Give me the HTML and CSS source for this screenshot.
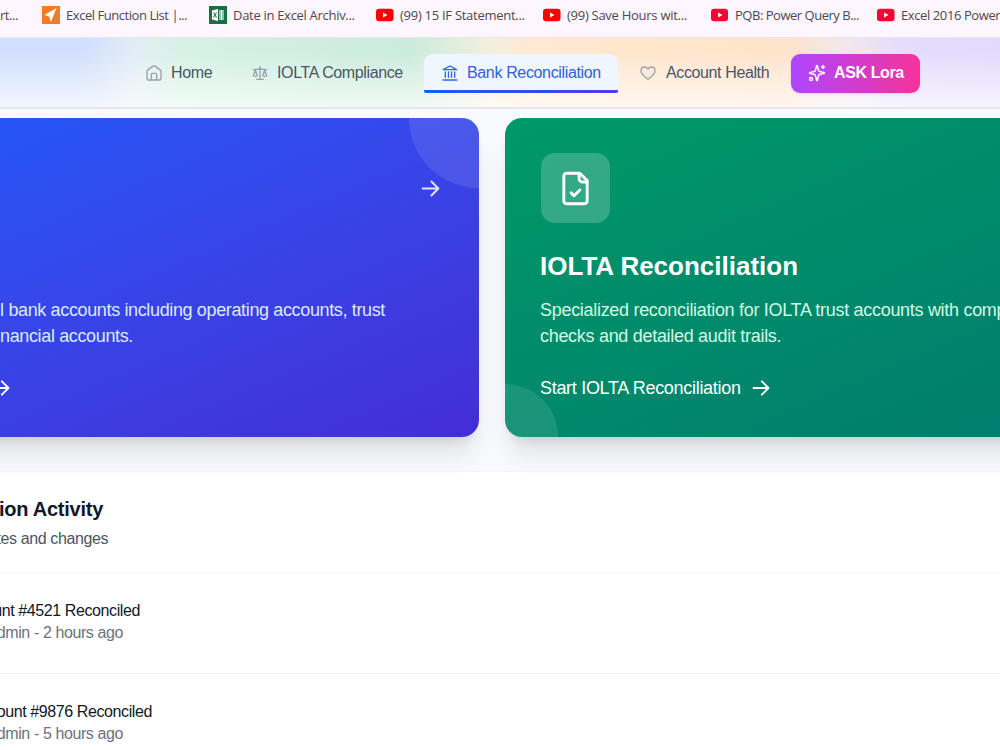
FILE: index.html
```html
<!DOCTYPE html>
<html lang="en">
<head>
  <meta charset="UTF-8">
  <meta name="viewport" content="width=device-width, initial-scale=1.0">
  <title>Bank Reconciliation</title>
  <link rel="stylesheet" href="styles.css">
</head>
<body>
  <!-- Bookmarks bar -->
  <div class="bookmarks">
    <div class="bookmark bm-first"><span>rt...</span></div>
    <div class="bookmark bm-functions">
      <svg width="18" height="18" viewBox="0 0 18 18"><rect width="18" height="18" fill="#ee7d2b"/><path d="M14.500 2L2.500 9l4.500 1.500L9 16z" fill="#fff"/></svg>
      <span>Excel Function List |...</span>
    </div>
    <div class="bookmark bm-date">
      <svg width="18" height="18" viewBox="0 0 18 18"><rect width="18" height="18" fill="#1d6f42"/><path d="M3 4.500l6-1.500v12l-6-1.500z" fill="#fff"/><path d="M4.500 6.500l3 5M7.500 6.500l-3 5" stroke="#1d6f42"/><path d="M10 4h5v10h-5z" fill="#8fc3a5"/><path d="M12.500 4v10" stroke="#fff"/></svg>
      <span>Date in Excel Archiv...</span>
    </div>
    <div class="bookmark bm-if">
      <svg width="18" height="14" viewBox="0 0 18 14"><rect y=".7" width="17.500" height="12.500" rx="3" fill="#f00"/><path d="M7 4.500v5l4.500-2.500z" fill="#fff"/></svg>
      <span>(99) 15 IF Statement...</span>
    </div>
    <div class="bookmark bm-hours">
      <svg width="18" height="14" viewBox="0 0 18 14"><rect y=".7" width="17.500" height="12.500" rx="3" fill="#f00"/><path d="M7 4.500v5l4.500-2.500z" fill="#fff"/></svg>
      <span>(99) Save Hours wit...</span>
    </div>
    <div class="bookmark bm-pqb">
      <svg width="18" height="14" viewBox="0 0 18 14"><rect y=".7" width="17" height="12.500" rx="3" fill="#ff0033"/><path d="M7 4.500v5l4.500-2.500z" fill="#fff"/></svg>
      <span>PQB: Power Query B...</span>
    </div>
    <div class="bookmark bm-power">
      <svg width="18" height="14" viewBox="0 0 18 14"><rect y=".7" width="17.500" height="12.500" rx="3" fill="#ff0033"/><path d="M7 4.500v5l4.500-2.500z" fill="#fff"/></svg>
      <span>Excel 2016 Power</span>
    </div>
  </div>

  <!-- Main navigation -->
  <header class="header">
    <nav class="nav">
      <a class="nav-item nav-home">
        <svg class="icon" viewBox="0 0 24 24"><path d="M1.500 9.500Q1.500 8.500 2.500 7.700L10.500 1.700Q12 .8 13.500 1.700L21.500 7.700Q22.500 8.500 22.500 9.500V20.500a2 2 0 0 1-2 2h-17a2 2 0 0 1-2-2z"/><path d="M8 22v-7.500a2 2 0 0 1 2-2h4a2 2 0 0 1 2 2V22"/></svg>
        <span>Home</span>
      </a>
      <a class="nav-item nav-iolta">
        <svg class="icon" viewBox="0 0 24 24"><path d="M16 16l3-8 3 8c-.87.65-1.920 1-3 1s-2.130-.35-3-1zM2 16l3-8 3 8c-.87.65-1.920 1-3 1s-2.130-.35-3-1zM7 21.500h10M12 2.500v19M2 7h3c2 0 5-1 7-2 2 1 5 2 7 2h3"/></svg>
        <span>IOLTA Compliance</span>
      </a>
      <a class="nav-item nav-bank active">
        <svg class="icon" viewBox="0 0 24 24"><path d="M2 7L12 1.500 22 7z"/><path d="M5 10.500v8M9.700 10.500v8M14.300 10.500v8M19 10.500v8M1.500 22.500h21"/></svg>
        <span>Bank Reconciliation</span>
      </a>
      <a class="nav-item nav-health">
        <svg class="icon" viewBox="0 0 24 24"><path d="M12 21.500C8 18.500 1.500 14 1.500 8.500c0-3.300 2.500-5.500 5.300-5.500C9 3 11 4.200 12 6c1-1.800 3-3 5.200-3 2.800 0 5.300 2.200 5.300 5.500 0 5.500-6.500 10-10.500 13z"/></svg>
        <span>Account Health</span>
      </a>
      <a class="ask-btn">
        <svg class="icon" viewBox="0 0 24 24"><path d="M9.937 15.500A2 2 0 0 0 8.500 14.063l-6.135-1.582a.5.5 0 0 1 0-.962L8.500 9.936A2 2 0 0 0 9.937 8.500l1.582-6.135a.5.5 0 0 1 .963 0L14.063 8.500A2 2 0 0 0 15.500 9.937l6.135 1.581a.5.5 0 0 1 0 .964L15.500 14.063a2 2 0 0 0-1.437 1.437l-1.582 6.135a.5.5 0 0 1-.963 0zM20 2v4M22 4h-4"/><circle cx="4" cy="20" r="2"/></svg>
        <span>ASK Lora</span>
      </a>
    </nav>
  </header>

  <!-- Reconciliation types -->
  <main class="cards">
    <section class="card card-bank">
      <div class="card-circle"></div>
      <div class="card-top">
        <svg class="arrow arrow-lg" viewBox="0 0 24 24"><path d="M3 12h18M13 4l8 8-8 8"/></svg>
      </div>
      <p class="card-text"><span>all bank accounts including operating accounts, trust</span><span class="line-two">financial accounts.</span></p>
      <div class="card-link">
        <svg class="arrow" viewBox="0 0 24 24"><path d="M3 12h18M13 4l8 8-8 8"/></svg>
      </div>
    </section>
    <section class="card card-iolta">
      <div class="card-circle"></div>
      <div class="card-icon">
        <svg viewBox="0 0 24 24"><path d="M15 1.500H6a2 2 0 0 0-2 2v17a2 2 0 0 0 2 2h12a2 2 0 0 0 2-2v-14z"/><path d="M14.500 2v3.500a2 2 0 0 0 2 2H20M9 15l2 2 4-4"/></svg>
      </div>
      <h2 class="card-title">IOLTA Reconciliation</h2>
      <p class="card-text">Specialized reconciliation for IOLTA trust accounts with compliance<br>checks and detailed audit trails.</p>
      <div class="card-link">
        <span>Start IOLTA Reconciliation</span>
        <svg class="arrow" viewBox="0 0 24 24"><path d="M3 12h18M13 4l8 8-8 8"/></svg>
      </div>
    </section>
  </main>

  <!-- Recent activity -->
  <section class="activity">
    <div class="activity-header">
      <h3 class="clip clip-title"><span>Reconciliation Activity</span></h3>
      <p class="clip clip-sub"><span>updates and changes</span></p>
    </div>
    <div class="activity-row">
      <p class="clip row-name-one"><span>Account #4521 Reconciled</span></p>
      <p class="clip row-meta"><span>Admin - 2 hours ago</span></p>
    </div>
    <div class="activity-row">
      <p class="clip row-name-two"><span>Account #9876 Reconciled</span></p>
      <p class="clip row-meta"><span>Admin - 5 hours ago</span></p>
    </div>
  </section>
</body>
</html>
```
FILE: styles.css
```css
* {
  box-sizing: border-box;
}

body {
  margin: 0;
  width: 1000px;
  height: 750px;
  overflow: hidden;
  background: #f9fafd;
  font-family: "Liberation Sans", Arial, sans-serif;
}

h2, h3, p {
  margin: 0;
}

svg {
  flex-shrink: 0;
  display: block;
}

.icon, .arrow, .card-icon svg {
  fill: none;
  stroke: currentColor;
  stroke-width: 2;
  stroke-linecap: round;
  stroke-linejoin: round;
}

/* bookmarks */
.bookmarks {
  display: flex;
  align-items: center;
  height: 38px;
  padding-bottom: 7px;
  background: #fdf6fe;
  border-bottom: 1px solid #e9e3ea;
  font-family: "Open Sans", "Noto Sans", sans-serif;
  font-size: 13px;
  letter-spacing: -0.3px;
  color: #4d484f;
  white-space: nowrap;
}

.bookmark {
  display: flex;
  align-items: center;
  gap: 6px;
  flex-shrink: 0;
}

.bm-first { width: 42px; letter-spacing: -0.45px; }
.bm-functions { width: 167px; letter-spacing: -0.45px; }
.bm-date { width: 167px; }
.bm-if { width: 167px; letter-spacing: -0.27px; }
.bm-hours { width: 168px; letter-spacing: -0.27px; }
.bm-pqb { width: 166px; letter-spacing: -0.48px; }
.bm-power { letter-spacing: -0.4px; }

/* header */
.header {
  height: 71px;
  padding: 16px 0 0 128px;
  border-bottom: 2px solid #e7e8ee;
  background:
    linear-gradient(to bottom, rgba(255, 255, 255, 0) 20%, rgba(255, 255, 255, 0.7) 100%),
    linear-gradient(94deg, #d2dffe 0, #d2dffe 85px, #e2eef4 140px, #d5f2e4 185px, #cbebdc 410px, #f3f0dd 490px, #ffe9d0 530px, #ffe3cb 790px, #f1e7ed 845px, #e6dcfd 900px, #e2d9fd 100%);
}

.nav {
  display: flex;
  gap: 4px;
}

.nav-item, .ask-btn {
  display: flex;
  align-items: center;
  height: 39px;
  padding: 0 17px 2px 18px;
  gap: 9px;
  font-size: 16px;
  letter-spacing: -0.38px;
  color: #4a5565;
  white-space: nowrap;
}

.nav-item .icon {
  width: 16px;
  height: 16px;
  color: #99a1af;
}

.nav-home { width: 102px; }
.nav-iolta { width: 186px; }
.nav-bank { width: 194px; letter-spacing: -0.35px; }
.nav-health { width: 165px; gap: 10px; }

/* underline is a second background so the top corners stay round */
.nav-item.active {
  border-radius: 9px 9px 2px 2px;
  background:
    linear-gradient(to right, #155dfc, #4f39f6) bottom / 100% 3px no-repeat,
    #eff6ff;
  color: #2f62d9;
}

.nav-item.active .icon {
  color: #2f66e6;
}

.ask-btn {
  width: 129px;
  padding-left: 17px;
  gap: 8px;
  border-radius: 9px;
  background: linear-gradient(to right, #ad46ff, #f6339a);
  box-shadow: 0 1px 3px rgba(0, 0, 0, 0.12);
  color: #fff;
  font-weight: bold;
}

.ask-btn .icon {
  width: 18px;
  height: 18px;
}

/* cards */
.cards {
  display: grid;
  grid-template-columns: 740px 740px;
  gap: 26px;
  height: 362px;
  margin-left: -261px;
  padding-top: 9px;
}

.card {
  position: relative;
  height: 318.500px;
  padding: 35px 35px 35px 36px;
  overflow: hidden;
  border-radius: 17px;
  box-shadow: 0 22px 27px -5px rgba(0, 0, 0, 0.1), 0 9px 11px -6px rgba(0, 0, 0, 0.1);
  color: #fff;
}

.card-bank {
  background: linear-gradient(to bottom right in oklab, #155dfc, #432dd7);
}

.card-iolta {
  background: linear-gradient(to bottom right in oklab, #009966, #00786f);
}

.card-circle {
  position: absolute;
  border-radius: 50%;
  background: rgba(255, 255, 255, 0.1);
}

.card-bank .card-circle {
  top: -69px;
  right: -69px;
  width: 139px;
  height: 139px;
}

.card-iolta .card-circle {
  left: -52px;
  bottom: -52px;
  width: 105px;
  height: 105px;
}

.card-icon {
  display: flex;
  align-items: center;
  justify-content: center;
  width: 69px;
  height: 70px;
  border-radius: 14px;
  background: rgba(255, 255, 255, 0.2);
}

.card-icon svg {
  width: 35px;
  height: 35px;
}

.card-title {
  margin-top: 26px;
  font-size: 26px;
  line-height: 35px;
}

.card-text {
  font-size: 18px;
  letter-spacing: -0.33px;
  line-height: 26px;
  white-space: nowrap;
}

.card-bank .card-top {
  display: flex;
  align-items: center;
  justify-content: flex-end;
  height: 70px;
  padding-right: 3px;
}

.arrow {
  width: 20px;
  height: 20px;
}

.arrow-lg {
  width: 21px;
  height: 21px;
  stroke-width: 2.3;
  opacity: 0.85;
}

.card-bank .card-text {
  display: flex;
  flex-direction: column;
  align-items: flex-end;
  margin: 74px 59px 0 0;
  letter-spacing: -0.36px;
  color: #dbeafe;
}

.card-bank .line-two {
  margin-right: 252px;
}

.card-iolta .card-text {
  margin-top: 13px;
  letter-spacing: -0.3px;
  color: #d0fae5;
}

.card-iolta .card-title,
.card-iolta .card-text,
.card-iolta .card-link {
  margin-left: -1px;
}

.card-link {
  display: flex;
  align-items: center;
  gap: 10px;
  height: 26px;
  margin-top: 26px;
  font-size: 18px;
  letter-spacing: -0.3px;
}

.card-link .arrow {
  stroke-width: 2.200;
}

.card-bank .card-link {
  padding-left: 216px;
}

/* activity */
.activity {
  height: 279px;
  background: #fff;
  border-top: 1px solid #f3f4f6;
}

/* lines run off the left edge of the window */
.clip {
  display: flex;
  justify-content: flex-end;
  white-space: nowrap;
}

.activity-header {
  height: 101px;
  padding-top: 22px;
  border-bottom: 1px solid #f3f4f6;
}

.clip-title {
  width: 103px;
  font-size: 20px;
  letter-spacing: -0.25px;
  line-height: 30px;
  color: #101828;
}

.clip-sub {
  width: 108px;
  margin-top: 4px;
  font-size: 16px;
  letter-spacing: -0.4px;
  line-height: 22px;
  color: #4a5565;
}

.activity-row {
  height: 101px;
  padding-top: 27px;
  border-bottom: 1px solid #f3f4f6;
  font-size: 16px;
  letter-spacing: -0.4px;
  line-height: 22px;
}

.row-name-one {
  width: 140px;
  color: #101828;
}

.row-name-two {
  width: 152px;
  color: #101828;
}

.row-meta {
  width: 123px;
  color: #6a7282;
}
```
